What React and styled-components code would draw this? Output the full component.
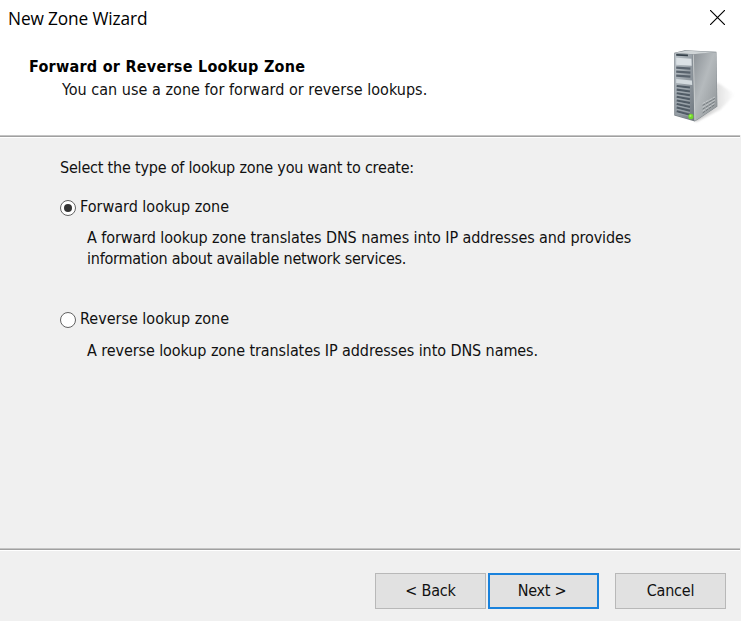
import React from "react";
import styled, { createGlobalStyle } from "styled-components";

const Global = createGlobalStyle`
  * { box-sizing: border-box; }
  body { margin: 0; background: #fff; }
`;

const Window = styled.div`
  width: 741px;
  height: 621px;
  display: flex;
  flex-direction: column;
  overflow: hidden;
  background: #f0f0f0;
  color: #111;
  font: 16px/21px "DejaVu Sans Condensed", "DejaVu Sans", sans-serif;
  font-stretch: condensed;
`;

const TitleBar = styled.header`
  height: 38px;
  flex: none;
  display: flex;
  justify-content: space-between;
  background: #fff;
  padding: 7px 16px 0 8px;
  color: #000;
  font: 17.3px/24px "Open Sans", "Noto Sans", sans-serif;
`;

const CloseButton = styled.button`
  width: 15px;
  height: 15px;
  margin-top: 3px;
  padding: 0;
  border: 0;
  background: none;
  svg { display: block; }
`;

const Banner = styled.section`
  height: 97px;
  flex: none;
  display: flex;
  justify-content: space-between;
  background: #fff;
  padding: 18px 0 0 29px;
`;

const BannerText = styled.div`
  display: flex;
  flex-direction: column;
`;

const Label = styled.span`
  display: block;
  white-space: nowrap;
  letter-spacing: ${(p) => p.$track || 0}px;
`;

const Heading = styled(Label)`
  font-weight: bold;
  color: #000;
`;

const Subheading = styled(Label)`
  margin: 2px 0 0 33px;
`;

const ServerArt = styled.svg`
  width: 80px;
  height: 80px;
  margin-top: -16px;
  overflow: visible;
`;

const Rule = styled.div`
  height: 3px;
  flex: none;
  margin-right: 1px;
  border-top: 1px solid #c4c4c4;
  border-bottom: 1px solid #fff;
  background: #a0a0a0;
`;

const Body = styled.main`
  flex: 1;
  padding: 19px 0 0 60px;
`;

const Option = styled.label`
  display: flex;
  align-items: center;
  gap: 4px;
  height: 21px;
  margin-top: ${(p) => p.$top}px;
`;

const Radio = styled.span`
  width: 16px;
  height: 16px;
  flex: none;
  margin-top: 2px;
  display: grid;
  place-items: center;
  border: 1px solid #626262;
  border-radius: 50%;
  background: #fff;
  &::after {
    content: "";
    width: 8px;
    height: 8px;
    border-radius: 50%;
    background: ${(p) => (p.$checked ? "#333" : "transparent")};
  }
`;

const Description = styled.div`
  margin: ${(p) => p.$top}px 0 0 27px;
`;

const Footer = styled.footer`
  height: 70px;
  flex: none;
  display: flex;
  justify-content: flex-end;
  padding: 22px 15px 0 0;
`;

const Button = styled.button`
  width: 111px;
  height: 36px;
  margin-left: ${(p) => p.$gap || 0}px;
  padding: 0 ${(p) => (p.$primary ? 3 : 0)}px 1px 0;
  border: ${(p) => (p.$primary ? "2px solid #1a82dc" : "1px solid #b8b8b8")};
  background: #e1e1e1;
  color: #111;
  font: inherit;
  letter-spacing: ${(p) => p.$track || 0}px;
`;

const vents = [0, 1, 2, 3, 4, 5, 6, 7];

function Server() {
  return (
    <ServerArt viewBox="0 0 80 80">
      <defs>
        <linearGradient id="side" x1="0" y1="0" x2="1" y2="1">
          <stop offset="0" stopColor="#8b9196" />
          <stop offset=".45" stopColor="#b5babd" />
          <stop offset="1" stopColor="#8d9295" />
        </linearGradient>
        <linearGradient id="front" x1="0" y1="0" x2="1" y2="1">
          <stop offset="0" stopColor="#bdc5cb" />
          <stop offset="1" stopColor="#6f777f" />
        </linearGradient>
        <linearGradient id="shade" x1="0" y1="0" x2="1" y2="0">
          <stop offset="0" stopColor="#a8a8a8" />
          <stop offset="1" stopColor="#fff" />
        </linearGradient>
        <filter id="soft"><feGaussianBlur stdDeviation="1.2" /></filter>
      </defs>
      <g transform="translate(.5 1.8) scale(.98 .995)">
        <path d="M34 80 L57 41 L75 53 L60 68 L36 80Z" fill="url(#shade)" opacity=".75" filter="url(#soft)" />
        <path d="M13 11 L24 8.5 L56 10 L57 65 L34 80 L13 74Z" fill="#777f85" />
        <path d="M32 12 L56 10.5 L56.5 65 L34 79.5Z" fill="url(#side)" />
        <path d="M14 11 L25 9 L55 10.3 L32 12.5Z" fill="#d0d5d7" />
        <path d="M13.5 11.5 L31.5 12.5 L33 79 L14 73.5Z" fill="url(#front)" />
        <path d="M15 12.2 L27 12.7 L27 14.6 L15 14Z" fill="#354049" />
        <path d="M15 16 L30.5 17 L30.8 24 L15 23Z" fill="#dbe1e5" />
        {[0, 1, 2].map((i) => (
          <path key={i} d={`M15 ${26 + i * 4} L29.5 ${27 + i * 4}`} stroke="#59636d" strokeWidth="2.2" />
        ))}
        <path d="M15 37.5 L31 39 L31.3 43.5 L15 41.5Z" fill="#d3dade" />
        {vents.map((i) => (
          <g key={i}>
            <path d={`M15.5 ${44.5 + i * 3.6} L29 ${46 + i * 3.9}`} stroke="#505b65" strokeWidth="2.1" />
            <path d={`M15.5 ${46.2 + i * 3.6} L29 ${47.7 + i * 3.9}`} stroke="#a3adb5" strokeWidth=".6" />
          </g>
        ))}
        <path d="M32.5 13 L34 79" stroke="#dde0e1" strokeWidth=".7" />
        {vents.slice(0, 6).map((i) => (
          <path key={i} d={`M42 ${62 + i * 1.9} L54.5 ${55.5 + i * 1.5}`} stroke={i % 2 ? "#737a7e" : "#c5c9cb"} strokeWidth="1" strokeDasharray="3 .8" />
        ))}
        <circle cx="30" cy="75" r="2.6" fill="#70d72b" />
        <circle cx="29.5" cy="74.5" r="1.1" fill="#a5f357" />
      </g>
    </ServerArt>
  );
}

export default function App() {
  return (
    <Window>
      <Global />
      <TitleBar>
        <Label $track={-0.13}>New Zone Wizard</Label>
        <CloseButton aria-label="Close">
          <svg width="15" height="15" viewBox="0 0 15 15">
            <path d="M0 0 L15 15 M15 0 L0 15" stroke="#000" strokeWidth="1.15" />
          </svg>
        </CloseButton>
      </TitleBar>
      <Banner>
        <BannerText>
          <Heading $track={0.26}>Forward or Reverse Lookup Zone</Heading>
          <Subheading $track={0.03}>You can use a zone for forward or reverse lookups.</Subheading>
        </BannerText>
        <Server />
      </Banner>
      <Rule />
      <Body>
        <Label $track={-0.2}>Select the type of lookup zone you want to create:</Label>
        <Option $top={18}>
          <Radio $checked />
          <Label>Forward lookup zone</Label>
        </Option>
        <Description $top={10}>
          <Label $track={-0.085}>A forward lookup zone translates DNS names into IP addresses and provides</Label>
          <Label $track={-0.24}>information about available network services.</Label>
        </Description>
        <Option $top={39}>
          <Radio />
          <Label>Reverse lookup zone</Label>
        </Option>
        <Description $top={11}>
          <Label $track={-0.085}>A reverse lookup zone translates IP addresses into DNS names.</Label>
        </Description>
      </Body>
      <Rule />
      <Footer>
        <Button $track={-0.2}>&lt; Back</Button>
        <Button $primary $gap={2} $track={-0.3}>Next &gt;</Button>
        <Button $gap={16} $track={-0.2}>Cancel</Button>
      </Footer>
    </Window>
  );
}
